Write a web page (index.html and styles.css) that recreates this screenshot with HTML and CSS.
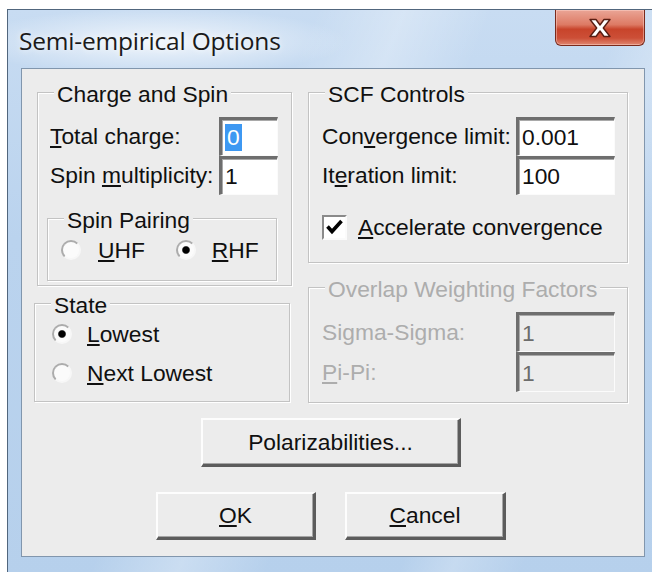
FILE: index.html
```html
<!DOCTYPE html>
<html lang="en">
<head>
<meta charset="utf-8">
<title>Semi-empirical Options</title>
<link rel="stylesheet" href="styles.css">
</head>
<body>
<div class="window">
  <div class="titlebar">
    <span class="title">Semi-empirical Options</span>
    <button class="close" type="button" aria-label="Close">
      <svg width="24" height="20" viewBox="0 0 24 20" aria-hidden="true">
        <path d="M2 1.5 H8 L12 7 L16 1.5 H22 L15.3 10 L22 18.5 H16 L12 13 L8 18.5 H2 L8.7 10 Z" fill="#fff" stroke="#5a1d12" stroke-width="1.4" stroke-linejoin="round"/>
      </svg>
    </button>
  </div>

  <div class="client">
    <div class="columns">
      <div class="column column-left">
        <fieldset class="group charge">
          <legend>Charge and Spin</legend>
          <div class="field">
            <span class="label"><u>T</u>otal charge:</span>
            <span class="edit edit-short"><span class="sel">0</span></span>
          </div>
          <div class="field">
            <span class="label">Spin <u>m</u>ultiplicity:</span>
            <span class="edit edit-short">1</span>
          </div>
          <fieldset class="group pairing">
            <legend>Spin Pairing</legend>
            <div class="radio-row">
              <span class="option opt-uhf"><span class="radio"></span><span><u>U</u>HF</span></span>
              <span class="option opt-rhf"><span class="radio checked"></span><span><u>R</u>HF</span></span>
            </div>
          </fieldset>
        </fieldset>

        <fieldset class="group state">
          <legend>State</legend>
          <div class="option state-opt"><span class="radio checked"></span><span><u>L</u>owest</span></div>
          <div class="option state-opt state-next"><span class="radio"></span><span><u>N</u>ext Lowest</span></div>
        </fieldset>
      </div>

      <div class="column column-right">
        <fieldset class="group scf">
          <legend>SCF Controls</legend>
          <div class="field">
            <span class="label">Con<u>v</u>ergence limit:</span>
            <span class="edit edit-long">0.001</span>
          </div>
          <div class="field">
            <span class="label">It<u>e</u>ration limit:</span>
            <span class="edit edit-long">100</span>
          </div>
          <div class="check-row">
            <span class="checkbox">
              <svg width="21" height="21" viewBox="0 0 21 21" aria-hidden="true">
                <polyline points="3.5,9.5 8,14.5 17.5,4" fill="none" stroke="#000" stroke-width="3.6"/>
              </svg>
            </span>
            <span><u>A</u>ccelerate convergence</span>
          </div>
        </fieldset>

        <fieldset class="group overlap" disabled>
          <legend>Overlap Weighting Factors</legend>
          <div class="field field-tall">
            <span class="label">Sigma-Sigma:</span>
            <span class="edit edit-long">1</span>
          </div>
          <div class="field field-tall">
            <span class="label"><u>P</u>i-Pi:</span>
            <span class="edit edit-long">1</span>
          </div>
        </fieldset>
      </div>
    </div>

    <div class="button-row polar-row">
      <button class="btn btn-polar" type="button">Polarizabilities...</button>
    </div>
    <div class="button-row actions">
      <button class="btn btn-ok" type="button"><u>O</u>K</button>
      <button class="btn btn-cancel" type="button"><u>C</u>ancel</button>
    </div>
  </div>
</div>
</body>
</html>
```

FILE: styles.css
```css
html, body {
  margin: 0;
  padding: 0;
}

body {
  width: 652px;
  height: 572px;
  overflow: hidden;
  background: #ffffff;
  font-family: "Liberation Sans", Arial, sans-serif;
  font-size: 22.8px;
  color: #101010;
}

u {
  text-decoration-thickness: 2px;
  text-underline-offset: 2px;
}

/* Window frame (Aero glass) */
.window {
  box-sizing: border-box;
  width: 652px;
  margin: 9px 0 0 7px;
  padding: 0 14px 24px 13px;
  border-top: 1px solid #51667d;
  border-left: 1px solid #51667d;
  background:
    radial-gradient(ellipse 190px 34px at 150px 32px, rgba(255, 255, 255, 0.75), rgba(255, 255, 255, 0) 100%),
    linear-gradient(112deg, rgba(255, 255, 255, 0) 35%, rgba(255, 255, 255, 0.28) 45%, rgba(255, 255, 255, 0) 55%, rgba(255, 255, 255, 0) 70%, rgba(255, 255, 255, 0.22) 76%, rgba(255, 255, 255, 0) 84%),
    linear-gradient(180deg, #c8dcf2 0%, #bad3ee 40%, #b6d0ec 100%);
}

.titlebar {
  display: flex;
  align-items: flex-start;
  height: 58px;
}

.title {
  margin-top: 16px;
  margin-left: -2px;
  font-family: "Open Sans", "Noto Sans", sans-serif;
  font-size: 24.5px;
  line-height: 30px;
  letter-spacing: -0.2px;
  color: #1a1a1a;
  text-shadow: 0 0 6px rgba(255, 255, 255, 0.9);
}

.close {
  margin-left: auto;
  width: 90px;
  height: 36px;
  padding: 0;
  display: flex;
  align-items: center;
  justify-content: center;
  border: 1px solid #7a2a1c;
  border-top: none;
  border-radius: 0 0 6px 6px;
  background: linear-gradient(180deg, #eaa596 0%, #dd7a64 42%, #c8442b 55%, #cc4f37 80%, #e08670 100%);
  box-shadow: inset 0 0 0 1px rgba(255, 220, 210, 0.45);
}

/* Client area */
.client {
  box-sizing: border-box;
  width: 624px;
  padding: 8px 16px 16px 12px;
  border: 1px solid #8196ad;
  background: #ececec;
}

.columns {
  display: flex;
  gap: 16px;
}

.column {
  display: flex;
  flex-direction: column;
}

.column-left {
  width: 258px;
}

.column-right {
  width: 320px;
}

/* Etched group boxes */
.group {
  box-sizing: border-box;
  min-width: 0;
  margin: 0;
  border: 1px solid #c3c3c3;
  box-shadow: inset 1px 1px 0 #ffffff, 1px 1px 0 #ffffff;
}

.group legend {
  margin-left: 3px;
  padding: 4px 3px 0;
  line-height: 26px;
  background: #ececec;
}

.charge {
  width: 255px;
  margin-left: 3px;
  padding: 10px 13px 4px 12px;
}

.charge > legend {
  margin-left: 4px;
}

.pairing {
  width: 230px;
  margin: 8px 0 0 -3px;
  padding: 2px 0 15px 13px;
}

.state {
  width: 256px;
  margin-top: 2px;
  padding: 0 0 12px 17px;
}

.state > legend {
  margin-left: -1px;
}

.scf {
  padding: 10px 12px 15px 13px;
}

.overlap {
  margin-top: 9px;
  padding: 10px 12px 10px 13px;
  color: #adadad;
}

/* Label + edit rows */
.field {
  display: flex;
  align-items: center;
  height: 39px;
}

.field-tall {
  height: 40px;
}

.field .edit {
  margin-left: auto;
}

.edit {
  box-sizing: border-box;
  display: flex;
  align-items: center;
  height: 100%;
  padding-left: 3px;
  border-top: 3px solid #6e6e6e;
  border-left: 3px solid #6e6e6e;
  border-right: 1px solid #fbfbfb;
  border-bottom: 1px solid #fbfbfb;
  box-shadow: inset 1px 1px 0 #a9a9a9;
  background: #ffffff;
  color: #101010;
}

.edit-short {
  width: 59px;
}

.edit-long {
  width: 99px;
}

.overlap .edit {
  background: #ececec;
  color: #6c6c6c;
}

.sel {
  padding: 0 2px;
  line-height: 27px;
  background: #3d98f2;
  color: #ffffff;
}

/* Radio buttons */
.option {
  display: flex;
  align-items: center;
}

.radio {
  box-sizing: border-box;
  flex: none;
  width: 20px;
  height: 20px;
  border-radius: 50%;
  border: 2px solid;
  border-color: #acacac #f7f7f7 #f7f7f7 #acacac;
  background: #fbfbfb;
}

.radio.checked {
  background: radial-gradient(circle, #000 3.2px, #fbfbfb 4.4px);
}

.radio-row {
  display: flex;
  align-items: center;
  height: 30px;
}

.opt-uhf .radio {
  margin-right: 17px;
}

.opt-rhf {
  margin-left: 31px;
}

.opt-rhf .radio {
  margin-right: 16px;
}

.state-opt {
  height: 32px;
}

.state-opt .radio {
  margin-right: 15px;
}

.state-next {
  margin-top: 7px;
}

/* Checkbox */
.check-row {
  display: flex;
  align-items: center;
  height: 39px;
  margin-top: 13px;
}

.checkbox {
  box-sizing: border-box;
  display: flex;
  align-items: center;
  justify-content: center;
  width: 25px;
  height: 25px;
  margin-right: 11px;
  border-top: 2px solid #8a8a8a;
  border-left: 2px solid #8a8a8a;
  border-right: 2px solid #fbfbfb;
  border-bottom: 2px solid #fbfbfb;
  background: #ffffff;
}

/* Push buttons */
.button-row {
  display: flex;
  justify-content: center;
}

.polar-row {
  margin-top: 15px;
}

.actions {
  margin-top: 25px;
  gap: 29px;
}

.btn {
  box-sizing: border-box;
  padding: 0;
  font: inherit;
  color: #101010;
  background: #ececec;
  border-style: solid;
  border-width: 2px 3px 3px 2px;
  border-color: #fdfdfd #5c5c5c #5c5c5c #fdfdfd;
  box-shadow: inset -1px -1px 0 #a5a5a5;
}

.btn-polar {
  width: 260px;
  height: 49px;
}

.btn-ok {
  width: 160px;
  height: 48px;
}

.btn-cancel {
  width: 161px;
  height: 48px;
}
```
